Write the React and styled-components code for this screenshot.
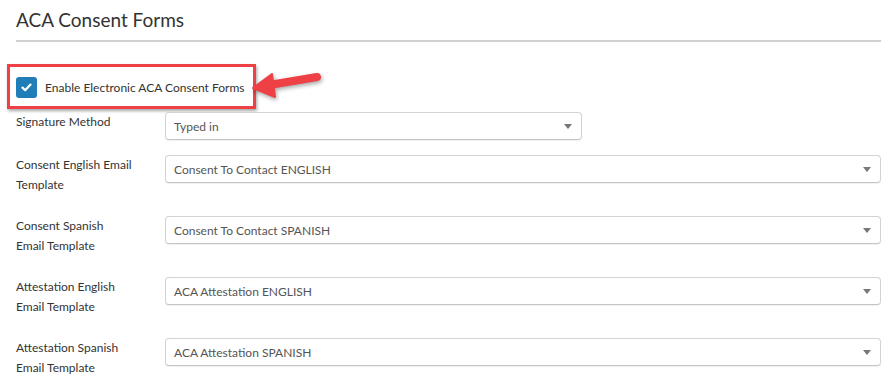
import React from 'react';
import styled, { createGlobalStyle } from 'styled-components';

const GlobalStyle = createGlobalStyle`
  body {
    margin: 0;
    background: #fff;
    font-family: Lato, "Open Sans", sans-serif;
    color: #333;
  }
`;

const Page = styled.div`
  padding: 0 13px 0 16px;
`;

const Title = styled.h2`
  margin: 0;
  padding-top: 8px;
  font-size: 19px;
  line-height: 24px;
  font-weight: 400;
  color: #333;
  padding-bottom: 8px;
  border-bottom: 2px solid #cfd0d2;
`;

const Highlight = styled.div`
  position: relative;
  display: inline-flex;
  align-items: center;
  gap: 8px;
  margin: 22px 0 0 -9px;
  padding: 10px 8px 8px 6px;
  box-sizing: border-box;
  width: 249px;
  border: 3px solid #ef4046;
  box-shadow: 1px 2px 3px rgba(0, 0, 0, 0.35);
`;

const Check = styled.span`
  flex: none;
  display: inline-flex;
  align-items: center;
  justify-content: center;
  width: 21px;
  height: 21px;
  border-radius: 3px;
  background: #1f7db8;
`;

const CheckLabel = styled.span`
  font-size: 12px;
  color: #333;
  white-space: nowrap;
`;

const Arrow = styled.svg`
  position: absolute;
  left: 235px;
  top: -3px;
  overflow: visible;
  filter: drop-shadow(1px 2px 2px rgba(0, 0, 0, 0.35));
`;

const Form = styled.div`
  margin-top: 3px;
`;

const Row = styled.div`
  display: flex;
  align-items: flex-start;
  margin-bottom: 15px;
`;

const Label = styled.div`
  width: 136px;
  margin-right: 13px;
  padding-bottom: 6px;
  font-size: 12px;
  line-height: 20px;
  color: #333;
  white-space: nowrap;
`;

const Select = styled.div`
  position: relative;
  box-sizing: border-box;
  width: ${(p) => (p.$narrow ? '417px' : '716px')};
  height: 28px;
  padding: 0 28px 0 8px;
  display: flex;
  align-items: center;
  border: 1px solid #d3d3d3;
  border-bottom-color: #c4c4c4;
  border-radius: 4px;
  box-shadow: 0 1px 1px rgba(0, 0, 0, 0.06);
  font-size: 12px;
  color: #555;
  background: #fff;

  &::after {
    content: '';
    position: absolute;
    right: 9px;
    top: 11px;
    border-left: 4px solid transparent;
    border-right: 4px solid transparent;
    border-top: 5px solid #777;
  }
`;

const fields = [
  { label: ['Signature Method'], value: 'Typed in', narrow: true },
  { label: ['Consent English Email', 'Template'], value: 'Consent To Contact ENGLISH' },
  { label: ['Consent Spanish', 'Email Template'], value: 'Consent To Contact SPANISH' },
  { label: ['Attestation English', 'Email Template'], value: 'ACA Attestation ENGLISH' },
  { label: ['Attestation Spanish', 'Email Template'], value: 'ACA Attestation SPANISH' },
];

export default function App() {
  return (
    <Page>
      <GlobalStyle />
      <Title>ACA Consent Forms</Title>
      <Highlight>
        <Check>
          <svg width="11" height="9" viewBox="0 0 11 9">
            <path d="M1.5 4.6 L4.2 7.2 L9.5 1.6" fill="none" stroke="#fff" strokeWidth="2.2" strokeLinecap="round" strokeLinejoin="round" />
          </svg>
        </Check>
        <CheckLabel>Enable Electronic ACA Consent Forms</CheckLabel>
        <Arrow width="85" height="45" viewBox="0 0 85 45">
          <line x1="24" y1="21" x2="72" y2="13" stroke="#ef4046" strokeWidth="8" strokeLinecap="round" />
          <polygon points="8,24 27,10 30,33" fill="#ef4046" stroke="#ef4046" strokeWidth="2" strokeLinejoin="round" />
        </Arrow>
      </Highlight>
      <Form>
        {fields.map((f) => (
          <Row key={f.value}>
            <Label>
              {f.label.map((line, i) => (
                <div key={i}>{line}</div>
              ))}
            </Label>
            <Select $narrow={f.narrow}>{f.value}</Select>
          </Row>
        ))}
      </Form>
    </Page>
  );
}
